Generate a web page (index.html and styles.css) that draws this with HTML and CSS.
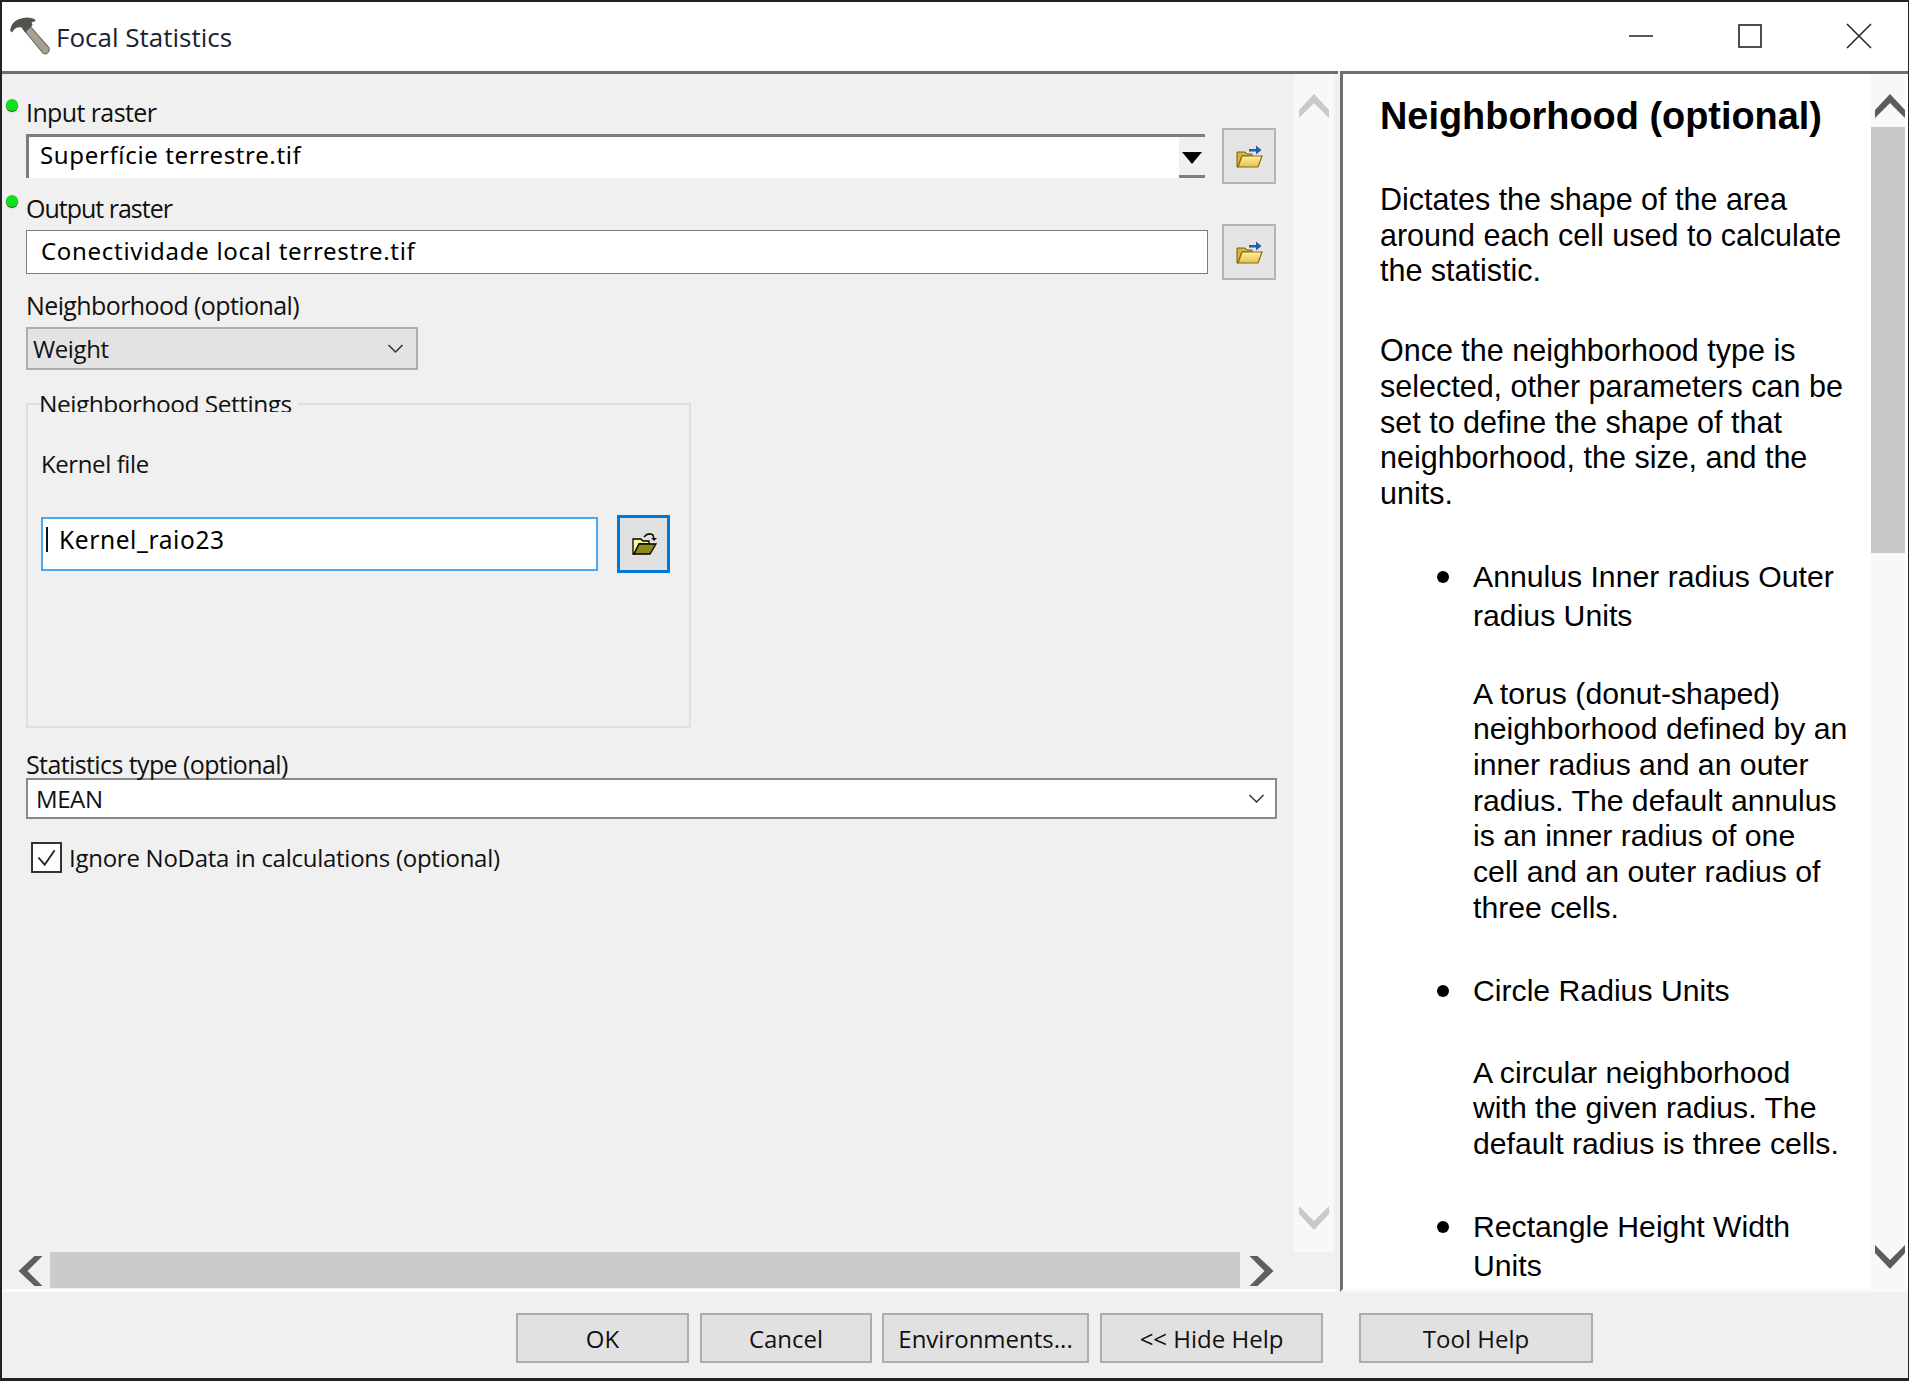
FILE: index.html
```html
<!DOCTYPE html>
<html lang="en">
<head>
<meta charset="utf-8">
<title>Focal Statistics</title>
<link rel="stylesheet" href="styles.css">
</head>
<body>
<svg class="defs" width="0" height="0" aria-hidden="true">
  <defs>
    <linearGradient id="fg" x1="0" y1="0" x2="0" y2="1"><stop offset="0" stop-color="#fdeea0"/><stop offset="1" stop-color="#e8c254"/></linearGradient>
    <symbol id="folder" viewBox="0 0 28 28">
      <path d="M2 10h8l2 2h5v2H7L3 25H2z" fill="#d9b13f" stroke="#7a5c10" stroke-width="1"/>
      <path d="M7 14h20l-4 11H3z" fill="url(#fg)" stroke="#8a6a14" stroke-width="1.2"/>
      <path d="M14 7h7V3.500l5.500 4.500-5.500 4.500V9.500h-7z" fill="#1f5fa8"/>
    </symbol>
    <symbol id="chev" viewBox="0 0 30 24">
      <path d="M0 24V16L15 0l15 16v8L15 9z"/>
    </symbol>
    <symbol id="chev-h" viewBox="0 0 24 30">
      <path d="M24 0h-8L0 15l16 15h8L9 15z"/>
    </symbol>
  </defs>
</svg>
<div class="window">
  <header class="titlebar">
    <svg class="hammer" viewBox="0 0 40 38">
      <path d="M14 13l5-5 20 23q1 4-3 6-2 0-3-1z" fill="#a9a093" stroke="#6e675c" stroke-width="1"/>
      <path d="M1 14Q2 6 10 3q8-3 15 0l1 2-4 1 1 3-7 7-4-5Q6 10 3 16z" fill="#55534f"/>
    </svg>
    <span class="title">Focal Statistics</span>
    <div class="winctl">
      <svg class="ctl" viewBox="0 0 26 26"><path d="M1 13h24" stroke="#222" stroke-width="1.5"/></svg>
      <svg class="ctl" viewBox="0 0 26 26"><rect x="2" y="2" width="22" height="22" fill="none" stroke="#222" stroke-width="1.6"/></svg>
      <svg class="ctl" viewBox="0 0 26 26"><path d="M1 1l24 24M25 1L1 25" stroke="#222" stroke-width="1.5"/></svg>
    </div>
  </header>
  <main class="main">
    <section class="left">
      <div class="left-top">
        <form class="form">
          <div class="label req first">Input raster</div>
          <div class="row">
            <div class="combo"><span class="ftext">Superfície terrestre.tif</span><span class="combo-btn"><i class="tri"></i></span></div>
            <button type="button" class="browse"><svg class="fico"><use href="#folder"/></svg></button>
          </div>
          <div class="label req second">Output raster</div>
          <div class="row">
            <div class="field"><span class="ftext">Conectividade local terrestre.tif</span></div>
            <button type="button" class="browse"><svg class="fico"><use href="#folder"/></svg></button>
          </div>
          <div class="label third">Neighborhood (optional)</div>
          <div class="select">Weight<svg class="dd" viewBox="0 0 16 10"><path d="M1 1l7 7 7-7" fill="none" stroke="#333" stroke-width="1.500"/></svg></div>
          <div class="group">
            <div class="legend"><span>Neighborhood Settings</span></div>
            <div class="klabel">Kernel file</div>
            <div class="krow">
              <div class="kfield"><i class="caret"></i><span class="ftext">Kernel_raio23</span></div>
              <button type="button" class="kbrowse">
                <svg class="kico" viewBox="0 0 26 24">
                  <path d="M2 22V7h8l2 2h6v3H8L3 22z" fill="#fdf79a" stroke="#000" stroke-width="1.300"/>
                  <path d="M8 12h17l-6 10H3z" fill="#8d8a1c" stroke="#000" stroke-width="1.300"/>
                  <path d="M13 5Q17 0 22 3l1 4" fill="none" stroke="#111" stroke-width="1.500"/>
                  <path d="M20 6h6l-3 3z" fill="#111"/>
                </svg>
              </button>
            </div>
          </div>
          <div class="label fourth">Statistics type (optional)</div>
          <div class="select wide">MEAN<svg class="dd" viewBox="0 0 16 10"><path d="M1 1l7 7 7-7" fill="none" stroke="#333" stroke-width="1.500"/></svg></div>
          <div class="check">
            <span class="box"><svg viewBox="0 0 30 30"><path d="M6 15l7 8L24 7" fill="none" stroke="#222" stroke-width="2"/></svg></span>
            <span>Ignore NoData in calculations (optional)</span>
          </div>
        </form>
        <div class="vscroll">
          <svg class="arrow light"><use href="#chev"/></svg>
          <svg class="arrow light down"><use href="#chev"/></svg>
        </div>
      </div>
      <div class="hscroll">
        <svg class="harrow"><use href="#chev-h"/></svg>
        <div class="hthumb"></div>
        <svg class="harrow flip"><use href="#chev-h"/></svg>
      </div>
    </section>
    <aside class="help">
      <div class="help-body">
        <h1>Neighborhood (optional)</h1>
        <p>Dictates the shape of the area around each cell used to calculate the statistic.</p>
        <p class="p2">Once the neighborhood type is selected, other parameters can be set to define the shape of that neighborhood, the size, and the units.</p>
        <ul>
          <li>
            <div class="lt">Annulus Inner radius Outer radius Units</div>
            <p>A torus (donut-shaped) neighborhood defined by an inner radius and an outer radius. The default annulus is an inner radius of one cell and an outer radius of three cells.</p>
          </li>
          <li>
            <div class="lt">Circle Radius Units</div>
            <p>A circular neighborhood with the given radius. The default radius is three cells.</p>
          </li>
          <li>
            <div class="lt">Rectangle Height Width Units</div>
          </li>
        </ul>
      </div>
      <div class="help-scroll">
        <svg class="arrow dark"><use href="#chev"/></svg>
        <div class="thumb"></div>
        <svg class="arrow dark down"><use href="#chev"/></svg>
      </div>
    </aside>
  </main>
  <footer class="footer">
    <button type="button" class="btn b-ok">OK</button>
    <button type="button" class="btn b-cancel">Cancel</button>
    <button type="button" class="btn b-env">Environments...</button>
    <button type="button" class="btn b-hide">&lt;&lt; Hide Help</button>
    <button type="button" class="btn b-tool">Tool Help</button>
  </footer>
</div>
</body>
</html>
```
FILE: styles.css
```css
* { box-sizing: border-box; }
html, body { margin: 0; padding: 0; }
body { width: 1909px; height: 1381px; overflow: hidden; background: #fff; font-family: "Open Sans", "Noto Sans", sans-serif; color: #111; }
.defs { position: absolute; }
.window { width: 1909px; height: 1381px; border: 2px solid #222; border-right-width: 1px; border-bottom-width: 3px; display: flex; flex-direction: column; background: #f0f0f0; }

.titlebar { height: 69px; flex: none; background: #fff; display: flex; align-items: center; padding-left: 7px; }
.hammer { width: 41px; height: 39px; margin-top: -2px; }
.title { font-size: 26px; margin-left: 6px; color: #1c2230; margin-top: 1px; }
.winctl { margin-left: auto; display: flex; gap: 83px; padding-right: 36px; margin-top: -2px; align-items: center; }
.ctl { width: 26px; height: 26px; display: block; }

.main { flex: 1; min-height: 0; display: flex; }
.left { width: 1336px; flex: none; display: flex; flex-direction: column; border-top: 3px solid #6f6f6f; margin-right: 2px; }
.left-top { flex: 1; min-height: 0; display: flex; }
.form { width: 1292px; flex: none; padding-left: 24px; }
.vscroll { width: 40px; background: #f8f8f8; display: flex; flex-direction: column; justify-content: space-between; align-items: center; padding: 20px 0 22px; }

.label { font-size: 25px; letter-spacing: -0.6px; line-height: 32px; position: relative; }
.req::before { content: ""; position: absolute; left: -20px; top: 3px; width: 12px; height: 12px; border-radius: 50%; background: #11e022; box-shadow: 0 1px 1px #0a5a12; }
.first { margin-top: 22px; height: 38px; }
.second { margin-top: 14px; height: 38px; letter-spacing: -1px; }
.third { margin-top: 15px; height: 38px; }
.fourth { margin-top: 20px; height: 30px; }

.row { display: flex; align-items: center; justify-content: space-between; width: 1250px; height: 44px; }
.ftext { font-family: "Noto Sans", sans-serif; font-size: 24px; letter-spacing: 0.7px; color: #000; line-height: 1; }
.combo { width: 1179px; height: 44px; background: #fff; border-top: 3px solid #7d7d7d; border-left: 3px solid #7d7d7d; display: flex; align-items: center; justify-content: space-between; padding-left: 11px; }
.combo .ftext { margin-bottom: 6px; letter-spacing: 0.65px; }
.combo-btn { width: 26px; height: 41px; background: #f0f0f0; border-bottom: 3px solid #7d7d7d; display: flex; align-items: center; justify-content: center; }
.tri { width: 0; height: 0; border-left: 10px solid transparent; border-right: 10px solid transparent; border-top: 12px solid #000; margin-top: 4px; }
.field { width: 1182px; height: 44px; background: #fff; border: 1.500px solid #7d7d7d; display: flex; align-items: center; padding: 0 0 2px 14px; }
.browse { width: 54px; height: 56px; padding: 0; background: #e4e4e4; border: 2px solid #b4b4b4; display: flex; align-items: center; justify-content: center; }
.fico { width: 28px; height: 28px; display: block; }

.select { width: 392px; height: 43px; background: #e3e3e3; border: 2px solid #adadad; display: flex; align-items: center; justify-content: space-between; padding: 0 12px 0 5px; font-size: 24px; letter-spacing: -0.4px; }
.dd { width: 17px; height: 10px; flex: none; }

.group { width: 665px; height: 325px; margin-top: 33px; border: 2px solid #dfdfdf; padding: 0 13px; }
.legend { margin: -9px 0 0 0; height: 16px; overflow: hidden; }
.legend span { display: inline-block; background: #f0f0f0; padding: 0 6px 0 12px; margin-left: -14px; font-size: 24.500px; letter-spacing: -0.5px; line-height: 30px; vertical-align: top; margin-top: -7px; }
.klabel { font-size: 24px; letter-spacing: -0.4px; line-height: 32px; margin-top: 36px; }
.krow { display: flex; align-items: center; margin-top: 35px; }
.kfield { width: 557px; height: 54px; background: #fff; border: 2px solid #4aa8ee; display: flex; padding: 6px 0 0 3px; }
.caret { width: 2px; height: 25px; background: #111; margin: 2px 11px 0 0; flex: none; }
.kfield .ftext { line-height: 30px; letter-spacing: 0.6px; font-size: 24.500px; }
.kbrowse { width: 53px; height: 58px; margin-left: 19px; padding: 0; background: #e1e1e1; border: 3px solid #0078d7; display: flex; align-items: center; justify-content: center; }
.kico { width: 26px; height: 24px; display: block; }

.wide { width: 1251px; height: 41px; background: #fff; border: 2px solid #8a8a8a; padding: 0 10px 0 8px; }
.check { display: flex; align-items: center; margin: 22px 0 0 5px; font-size: 24px; letter-spacing: -0.26px; gap: 7px; height: 32px; }
.box { width: 31px; height: 31px; border: 2px solid #333; background: #fff; display: block; flex: none; }
.box svg { display: block; width: 27px; height: 27px; }

.arrow { display: block; width: 30px; height: 24px; }
.down { transform: scaleY(-1); }
.light { fill: #c9c9c9; }
.dark { fill: #5c5c5c; margin-left: 4px; }

.hscroll { height: 40px; flex: none; display: flex; align-items: flex-start; padding-left: 15px; border-bottom: 3px solid #fafafa; }
.harrow { width: 27px; height: 30px; fill: #5f5f5f; flex: none; margin-top: 4px; }
.flip { transform: scaleX(-1); margin-left: 8px; }
.hthumb { width: 1190px; height: 36px; margin-left: 6px; background: #cbcbcb; }

.help { flex: 1; min-width: 0; display: flex; background: #fff; border-top: 3px solid #6f6f6f; border-left: 3px solid #6f6f6f; border-bottom: 3px solid #fafafa; font-family: "Liberation Sans", Arial, sans-serif; color: #000; overflow: hidden; }
.help-body { width: 528px; flex: none; padding: 19px 14px 0 37px; overflow: hidden; }
.help h1 { margin: 0 0 43px; font-size: 37.900px; line-height: 46px; font-weight: 700; }
.help p { margin: 0; font-size: 30.500px; line-height: 35.700px; }
.help .p2 { margin-top: 44px; }
.help ul { list-style: none; margin: 45px 0 0; padding: 0 9px 0 93px; }
.help li { position: relative; margin-bottom: 45px; }
.help li::before { content: ""; position: absolute; left: -36px; top: 14px; width: 12px; height: 12px; border-radius: 50%; background: #000; }
.lt { font-size: 30.200px; line-height: 39px; }
.help li p { margin-top: 41px; font-size: 30.200px; }
.help li:nth-child(2) p { margin-top: 45px; }
.help-scroll { width: 34px; flex: none; background: #f8f8f8; display: flex; flex-direction: column; align-items: flex-start; padding-top: 20px; }
.thumb { width: 34px; height: 426px; background: #c8c8c8; margin-top: 9px; }
.help-scroll .down { margin-top: 692px; }

.footer { height: 86px; flex: none; background: #f0f0f0; display: flex; padding: 21px 0 0 514px; align-items: flex-start; }
.btn { height: 50px; background: #e1e1e1; border: 2px solid #adadad; font-family: "Open Sans", sans-serif; font-size: 24px; color: #111; padding: 0; }
.b-ok { width: 173px; }
.b-cancel { width: 172px; margin-left: 11px; }
.b-env { width: 207px; margin-left: 10px; }
.b-hide { width: 223px; margin-left: 11px; }
.b-tool { width: 234px; margin-left: 36px; }
```
